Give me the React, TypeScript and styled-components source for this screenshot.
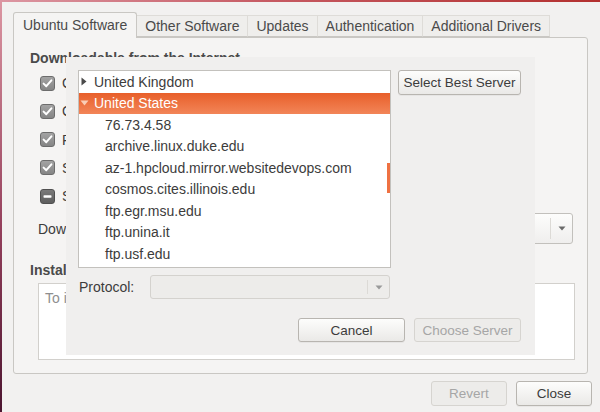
import React from "react";
import styled, { createGlobalStyle } from "styled-components";

const Global = createGlobalStyle`
  html, body { margin: 0; padding: 0; }
  body {
    font-family: "Liberation Sans", Arial, sans-serif;
    font-size: 14px;
    color: #3c3c3c;
  }
`;

const Window = styled.div`
  position: relative;
  width: 600px;
  height: 412px;
  box-sizing: border-box;
  padding: 12px 8px 0 13px;
  overflow: hidden;
  display: flex;
  flex-direction: column;
  background:
    linear-gradient(to right, #dc96a2, #c65a62 45%, #b3302f) top left / 100% 2px no-repeat,
    linear-gradient(#dc96a2, #94405c 55%, #4c1530) top left / 2px 100% no-repeat,
    #f2f1f0;
`;

const Notebook = styled.div`
  display: flex;
  flex-direction: column;
  margin-right: 4px;
`;

const TabBar = styled.div`
  display: flex;
  align-items: flex-end;
  height: 26px;
  margin-bottom: -1px;
  position: relative;
  z-index: 1;
`;

const Tab = styled.div<{ $active?: boolean }>`
  box-sizing: border-box;
  display: flex;
  align-items: center;
  white-space: nowrap;
  color: #4a4a4a;
  height: ${(p) => (p.$active ? "26px" : "22px")};
  padding: ${(p) => (p.$active ? "0 9px 1px 9px" : "0 8px")};
  background: ${(p) => (p.$active ? "#f5f4f3" : "#efeeec")};
  border: 1px solid ${(p) => (p.$active ? "#c9c7c3" : "#dedcd8")};
  border-bottom: ${(p) => (p.$active ? "none" : "1px solid #c9c7c3")};
  border-left: ${(p) => (p.$active ? "1px solid #c9c7c3" : "none")};
  border-radius: ${(p) => (p.$active ? "3px 3px 0 0" : "0")};
  margin-bottom: ${(p) => (p.$active ? "0" : "1px")};
`;

const Page = styled.div`
  box-sizing: border-box;
  height: 337px;
  border: 1px solid #c9c7c3;
  border-radius: 0 3px 3px 3px;
  background: #f5f4f3;
  padding: 12px 12px 0 16px;
  display: flex;
  flex-direction: column;
`;

const SectionTitle = styled.div<{ $gap?: number }>`
  font-weight: bold;
  color: #4a4a4a;
  line-height: 17px;
  margin-top: ${(p) => p.$gap ?? 0}px;
  white-space: nowrap;
`;

const CheckList = styled.div`
  margin: 2px 0 0 10px;
  display: flex;
  flex-direction: column;
`;

const CheckRow = styled.div`
  height: 28.25px;
  display: flex;
  align-items: center;
  gap: 7px;
  white-space: nowrap;
  color: #3c3c3c;
`;

const CheckBox = styled.span<{ $mixed?: boolean }>`
  box-sizing: border-box;
  width: 15px;
  height: 15px;
  flex: 0 0 15px;
  border-radius: 3px;
  border: 1px solid ${(p) => (p.$mixed ? "#505050" : "#6c6c6c")};
  background: ${(p) =>
    p.$mixed
      ? "linear-gradient(#7a7a7a, #5e5e5e)"
      : "linear-gradient(#a3a3a3, #858585)"};
  display: flex;
  align-items: center;
  justify-content: center;
`;

const DownloadRow = styled.div`
  margin: 3px 2px 0 8px;
  height: 31px;
  display: flex;
  align-items: center;
  gap: 12px;
  white-space: nowrap;
`;

const Combo = styled.div<{ $disabled?: boolean; $w?: number }>`
  box-sizing: border-box;
  height: 100%;
  ${(p) => (p.$w ? `width: ${p.$w}px;` : "flex: 1;")}
  border: 1px solid ${(p) => (p.$disabled ? "#d4d2ce" : "#c2c0bc")};
  border-radius: 3px;
  background: ${(p) =>
    p.$disabled ? "#edecea" : "linear-gradient(#fdfdfc, #efeeed)"};
  display: flex;
  justify-content: flex-end;
  align-items: center;
`;

const ComboSep = styled.span`
  width: 1px;
  align-self: stretch;
  margin: 4px 0;
  background: #dcdad6;
`;

const ComboArrow = styled.span`
  width: 21px;
  display: flex;
  align-items: center;
  justify-content: center;
`;

const TextView = styled.div`
  box-sizing: border-box;
  margin: 4px 0 0 8px;
  height: 77px;
  background: #ffffff;
  border: 1px solid #d2d0cc;
  padding: 5px 6px;
  line-height: 18px;
  color: #8e8e8e;
  white-space: nowrap;
  overflow: hidden;
`;

const ActionRow = styled.div`
  display: flex;
  justify-content: flex-end;
  gap: 9px;
  margin-top: 7px;
`;

const Button = styled.button<{ $w: number; $disabled?: boolean; $h?: number }>`
  box-sizing: border-box;
  width: ${(p) => p.$w}px;
  height: ${(p) => p.$h ?? 24}px;
  padding: 0;
  font-family: "Liberation Sans", Arial, sans-serif;
  font-size: 13.5px;
  border-radius: 3px;
  color: ${(p) => (p.$disabled ? "#a6a6a6" : "#3c3c3c")};
  border: 1px solid ${(p) => (p.$disabled ? "#d6d4d0" : "#b8b5b0")};
  background: ${(p) =>
    p.$disabled ? "#edecea" : "linear-gradient(#fdfdfc, #eae9e7)"};
  box-shadow: ${(p) => (p.$disabled ? "none" : "0 1px 0 rgba(0,0,0,0.04)")};
  white-space: nowrap;
`;

/* ----- dialog ----- */

const Dialog = styled.div`
  position: absolute;
  left: 66px;
  top: 57px;
  width: 469px;
  height: 298px;
  box-sizing: border-box;
  background: #f0efee;
  padding: 13px 14px 0 12px;
  display: flex;
  flex-direction: column;
  z-index: 5;
`;

const TopRow = styled.div`
  display: flex;
  align-items: flex-start;
  gap: 7px;
`;

const Tree = styled.div`
  position: relative;
  box-sizing: border-box;
  width: 313px;
  height: 198px;
  background: #ffffff;
  border: 1px solid #c3c1bd;
  overflow: hidden;
`;

const TreeRow = styled.div<{ $selected?: boolean; $level: number }>`
  height: 21.5px;
  display: flex;
  align-items: center;
  white-space: nowrap;
  padding-left: ${(p) => (p.$level === 0 ? 1 : 26)}px;
  color: ${(p) => (p.$selected ? "#ffffff" : "#3c3c3c")};
  background: ${(p) =>
    p.$selected ? "linear-gradient(#e85f2a, #f28558)" : "transparent"};
`;

const Expander = styled.span<{ $indent: number }>`
  width: 14px;
  box-sizing: border-box;
  padding-left: ${(p) => p.$indent}px;
  display: flex;
  align-items: center;
  justify-content: flex-start;
`;

const ScrollMark = styled.span`
  position: absolute;
  right: 0;
  top: 92px;
  width: 3px;
  height: 30px;
  background: #ef7142;
`;

const ProtocolRow = styled.div`
  margin-top: 7px;
  height: 24px;
  display: flex;
  align-items: center;
`;

const ProtoLabel = styled.span`
  width: 72px;
  padding-left: 1px;
  box-sizing: border-box;
  color: #3c3c3c;
`;

const DialogButtons = styled.div`
  margin-top: 19px;
  display: flex;
  justify-content: flex-end;
  gap: 9px;
`;

const Check = () => (
  <svg width="11" height="11" viewBox="0 0 11 11">
    <path d="M1.6 5.6 L4.3 8.2 L9.4 2.3" stroke="#fff" strokeWidth="2" fill="none" strokeLinecap="round" strokeLinejoin="round" />
  </svg>
);

const Mixed = () => (
  <svg width="11" height="11" viewBox="0 0 11 11">
    <rect x="1.5" y="4.3" width="8" height="2.4" rx="0.6" fill="#fff" />
  </svg>
);

const Arrow = ({ color }: { color: string }) => (
  <svg width="8" height="5" viewBox="0 0 8 5">
    <path d="M0.5 0.5 L7.5 0.5 L4 4.5 Z" fill={color} />
  </svg>
);

const RightTri = () => (
  <svg width="6" height="9" viewBox="0 0 6 9">
    <path d="M0.5 0.5 L5.5 4.5 L0.5 8.5 Z" fill="#4a4a4a" />
  </svg>
);

const DownTri = () => (
  <svg width="9" height="6" viewBox="0 0 9 6">
    <path d="M0.5 0.5 L8.5 0.5 L4.5 5.5 Z" fill="#f9cdb6" />
  </svg>
);

const checks = [
  { label: "Canonical-supported free and open-source software (main)" },
  { label: "Community-maintained free and open-source software (universe)" },
  { label: "Proprietary drivers for devices (restricted)" },
  { label: "Software restricted by copyright or legal issues (multiverse)" },
  { label: "Source code", mixed: true },
];

const servers = [
  "76.73.4.58",
  "archive.linux.duke.edu",
  "az-1.hpcloud.mirror.websitedevops.com",
  "cosmos.cites.illinois.edu",
  "ftp.egr.msu.edu",
  "ftp.unina.it",
  "ftp.usf.edu",
];

const tabs = ["Ubuntu Software", "Other Software", "Updates", "Authentication", "Additional Drivers"];

export default function App() {
  return (
    <>
      <Global />
      <Window>
        <Notebook>
          <TabBar>
            {tabs.map((t, i) => (
              <Tab key={t} $active={i === 0}>
                {t}
              </Tab>
            ))}
          </TabBar>
          <Page>
            <SectionTitle>Downloadable from the Internet</SectionTitle>
            <CheckList>
              {checks.map((c) => (
                <CheckRow key={c.label}>
                  <CheckBox $mixed={c.mixed}>{c.mixed ? <Mixed /> : <Check />}</CheckBox>
                  {c.label}
                </CheckRow>
              ))}
            </CheckList>
            <DownloadRow>
              Download from:
              <Combo>
                <ComboSep />
                <ComboArrow>
                  <Arrow color="#6a6a6a" />
                </ComboArrow>
              </Combo>
            </DownloadRow>
            <SectionTitle $gap={18}>Installable from CD-ROM/DVD</SectionTitle>
            <TextView>To install from a CD-ROM or DVD, insert the medium into the drive.</TextView>
          </Page>
        </Notebook>
        <ActionRow>
          <Button $w={76} $h={25} $disabled>
            Revert
          </Button>
          <Button $w={76} $h={25}>
            Close
          </Button>
        </ActionRow>

        <Dialog>
          <TopRow>
            <Tree>
              <TreeRow $level={0}>
                <Expander $indent={1}>
                  <RightTri />
                </Expander>
                United Kingdom
              </TreeRow>
              <TreeRow $level={0} $selected>
                <Expander $indent={0}>
                  <DownTri />
                </Expander>
                United States
              </TreeRow>
              {servers.map((s) => (
                <TreeRow key={s} $level={1}>
                  {s}
                </TreeRow>
              ))}
              <ScrollMark />
            </Tree>
            <Button $w={123} $h={25}>
              Select Best Server
            </Button>
          </TopRow>
          <ProtocolRow>
            <ProtoLabel>Protocol:</ProtoLabel>
            <Combo $disabled $w={240}>
              <ComboSep />
              <ComboArrow>
                <Arrow color="#9a9a9a" />
              </ComboArrow>
            </Combo>
          </ProtocolRow>
          <DialogButtons>
            <Button $w={107}>Cancel</Button>
            <Button $w={107} $disabled>
              Choose Server
            </Button>
          </DialogButtons>
        </Dialog>
      </Window>
    </>
  );
}
